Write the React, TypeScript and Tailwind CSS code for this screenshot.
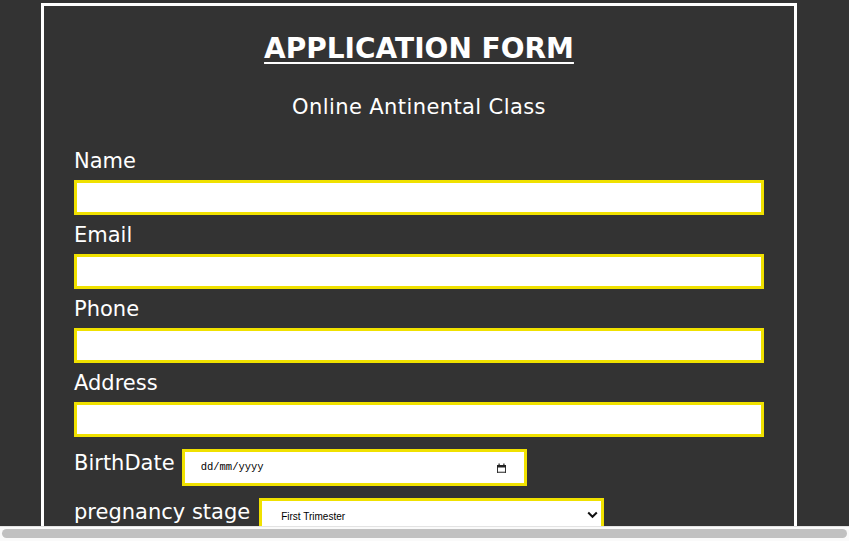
import React from "react";

function Field({ label, first }: { label: string; first?: boolean }) {
  return (
    <div className={first ? "mt-[30px]" : "mt-[8px]"}>
      <label className="block text-[21px] leading-[24px] mb-[7px]">{label}</label>
      <input
        type="text"
        className="block w-full h-[35px] border-[3px] border-[#f0e100] bg-white outline-none"
      />
    </div>
  );
}

export default function App() {
  return (
    <div className="w-[849px] h-[541px] overflow-hidden flex flex-col bg-[#333333] text-white font-['DejaVu_Sans',sans-serif]">
      <div className="h-[526px] overflow-hidden pt-[3px]">
        <div className="ml-[41px] w-[756px] border-[3px] border-white px-[30px] pt-[26px] pb-[40px]">
          <h1 className="text-center text-[28px] leading-[33px] font-bold underline decoration-2 underline-offset-[4px]">
            APPLICATION FORM
          </h1>
          <p className="mt-[30px] text-center text-[21px] leading-[24px] tracking-[0.4px]">Online Antinental Class</p>

          <Field label="Name" first />
          <Field label="Email" />
          <Field label="Phone" />
          <Field label="Address" />

          <div className="mt-[12px] flex items-start gap-[7px]">
            <span className="mt-[2px] text-[21px] leading-[24px]">BirthDate</span>
            <div className="w-[345px] h-[37px] border-[3px] border-[#f0e100] bg-white flex items-center justify-between pl-[16px] pr-[18px]">
              <span className="font-['Liberation_Mono',monospace] text-[10.5px] text-black">dd/mm/yyyy</span>
              <svg width="9" height="10" viewBox="0 0 9 10">
                <rect x="0.5" y="2.5" width="8" height="7" fill="none" stroke="#333" strokeWidth="1" />
                <rect x="0" y="2" width="9" height="2.5" fill="#222" />
                <rect x="1.5" y="0.5" width="1.2" height="2" fill="#222" />
                <rect x="6.3" y="0.5" width="1.2" height="2" fill="#222" />
                <rect x="1" y="8.5" width="7" height="1" fill="#888" />
              </svg>
            </div>
          </div>

          <div className="mt-[12px] flex items-start gap-[9px]">
            <span className="mt-[2px] text-[21px] leading-[24px]">pregnancy stage</span>
            <div className="w-[345px] h-[37px] border-[3px] border-[#f0e100] bg-white flex items-center justify-between pl-[19px] pr-[3px]">
              <span className="font-['Liberation_Sans',Arial,sans-serif] text-[10px] text-black">First Trimester</span>
              <svg width="11" height="8" viewBox="0 0 11 8" className="-mt-[3px]">
                <path d="M1.2 1.5 L5.5 5.8 L9.8 1.5" fill="none" stroke="#111" strokeWidth="2" />
              </svg>
            </div>
          </div>
        </div>
      </div>
      <div className="h-[15px] bg-[#fafafa] border-t border-[#e3e3e3] px-[2px] pt-[2px]">
        <div className="h-[9px] rounded-full bg-[#c1c1c1]" />
      </div>
    </div>
  );
}
